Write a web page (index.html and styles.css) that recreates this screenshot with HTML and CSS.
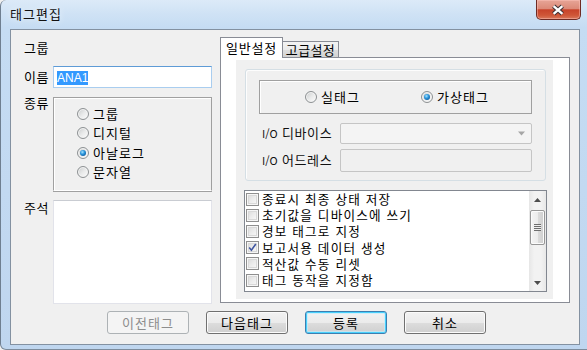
FILE: index.html
```html
<!DOCTYPE html>
<html lang="ko">
<head>
<meta charset="utf-8">
<title>태그편집</title>
<link rel="stylesheet" href="styles.css">
</head>
<body>
<div class="window">
  <div class="titlebar">
    <div class="title">태그편집</div>
    <div class="close-btn">
      <svg width="45" height="20" viewBox="0 0 45 20">
        <path d="M18 6 L27 14 M27 6 L18 14" stroke="#3d3034" stroke-width="4.6" fill="none"/>
        <path d="M18 6 L27 14 M27 6 L18 14" stroke="#ffffff" stroke-width="2.4" fill="none"/>
      </svg>
    </div>
  </div>
  <div class="client">
    <div class="main">
      <div class="left">
        <div class="row row-group"><span class="lbl">그룹</span></div>
        <div class="row row-name"><span class="lbl">이름</span><div class="edit focus"><span class="sel">ANA1</span></div></div>
        <div class="row row-kind">
          <span class="lbl lbl-top">종류</span>
          <div class="groupbox">
            <div class="opt"><span class="radio"></span><span>그룹</span></div>
            <div class="opt"><span class="radio"></span><span>디지털</span></div>
            <div class="opt"><span class="radio checked"></span><span>아날로그</span></div>
            <div class="opt"><span class="radio"></span><span>문자열</span></div>
          </div>
        </div>
        <div class="row row-note"><span class="lbl lbl-note">주석</span><div class="memo"></div></div>
      </div>
      <div class="tabs">
        <div class="tabstrip">
          <div class="tab active">일반설정</div>
          <div class="tab">고급설정</div>
        </div>
        <div class="tabpage">
          <div class="page-inner">
            <div class="rgroup">
              <div class="radiobox">
                <div class="ropt ropt-real"><span class="radio"></span><span>실태그</span></div>
                <div class="ropt"><span class="radio checked"></span><span>가상태그</span></div>
              </div>
              <div class="frow">
                <span class="flbl"><span class="io">I/O</span> 디바이스</span>
                <div class="combo disabled"><span class="combo-text"></span><span class="combo-arrow"><svg width="9" height="5" viewBox="0 0 9 5"><path d="M1 0.5 H8 L4.5 4.5 Z" fill="#a6a6a6"/></svg></span></div>
              </div>
              <div class="frow frow2">
                <span class="flbl"><span class="io">I/O</span> 어드레스</span>
                <div class="dedit"></div>
              </div>
            </div>
            <div class="listbox">
              <div class="items">
                <div class="item"><span class="chk"></span><span class="itxt">종료시 최종 상태 저장</span></div>
                <div class="item"><span class="chk"></span><span class="itxt">초기값을 디바이스에 쓰기</span></div>
                <div class="item"><span class="chk"></span><span class="itxt">경보 태그로 지정</span></div>
                <div class="item"><span class="chk checked"><svg width="9" height="9" viewBox="0 0 9 9"><path d="M1.2 4.6 L3.4 7.2 L7.8 1" stroke="#3f55a0" stroke-width="1.6" fill="none"/></svg></span><span class="itxt">보고서용 데이터 생성</span></div>
                <div class="item"><span class="chk"></span><span class="itxt">적산값 수동 리셋</span></div>
                <div class="item"><span class="chk"></span><span class="itxt">태그 동작을 지정함</span></div>
              </div>
              <div class="scrollbar">
                <div class="sb-btn"><svg width="7" height="4" viewBox="0 0 7 4"><path d="M0 4 H7 L3.5 0 Z" fill="#4d4d4d"/></svg></div>
                <div class="sb-track">
                  <div class="sb-thumb"><span class="grip"></span></div>
                </div>
                <div class="sb-btn"><svg width="7" height="4" viewBox="0 0 7 4"><path d="M0 0 H7 L3.5 4 Z" fill="#4d4d4d"/></svg></div>
              </div>
            </div>
          </div>
        </div>
      </div>
    </div>
    <div class="buttons">
      <div class="btn disabled">이전태그</div>
      <div class="btn">다음태그</div>
      <div class="btn default">등록</div>
      <div class="btn">취소</div>
    </div>
  </div>
</div>
</body>
</html>
```

FILE: styles.css
```css
* { box-sizing: border-box; }
html, body { margin: 0; padding: 0; }
body {
  width: 587px;
  height: 350px;
  overflow: hidden;
  background: #f0f0f0;
  font-family: "Noto Sans CJK KR", "Noto Sans", sans-serif;
  font-size: 13px;
  letter-spacing: 1px;
  line-height: 16px;
  color: #000;
}
.window {
  width: 587px;
  height: 350px;
  display: flex;
  flex-direction: column;
  background: linear-gradient(to bottom, #dceaf8 0px, #cfe2f5 14px, #c5dcf3 28px, #bfd6ef 100%);
  border-left: 1px solid #6f7f90;
  border-bottom: 1px solid #7d8c9c;
  border-radius: 6px 0 0 6px;
}
.titlebar {
  height: 29px;
  display: flex;
  align-items: flex-start;
  padding-left: 9px;
  flex: none;
}
.title {
  margin-top: 6px;
  line-height: 16px;
  color: #111;
  text-shadow: 0 0 6px rgba(255,255,255,0.9);
}
.close-btn {
  margin-left: auto;
  margin-right: 6px;
  width: 45px;
  height: 20px;
  border: 1px solid #6e2b24;
  border-top: none;
  border-radius: 0 0 5px 5px;
  background: linear-gradient(to bottom, #e7a597 0%, #dc8a78 45%, #c8432a 52%, #cf5637 80%, #d9785c 100%);
  box-shadow: inset 0 0 0 1px rgba(255,200,190,0.45);
  display: flex;
}
.close-btn svg { margin-left: -1px; }
.client {
  flex: none;
  margin-left: 9px;
  margin-right: 7px;
  height: 316px;
  background: #f0f0f0;
  border: 1px solid #8391a1;
  display: flex;
  flex-direction: column;
}
.main {
  display: flex;
  height: 273px;
}
.left {
  width: 201px;
  display: flex;
  flex-direction: column;
}
.row { display: flex; }
.lbl {
  width: 42px;
  padding-left: 13px;
  line-height: 16px;
  flex: none;
  letter-spacing: 0.6px;
}
.row-group { margin-top: 10px; }
.row-name { margin-top: 10px; align-items: center; }
.row-kind { margin-top: 9px; }
.lbl-top { margin-top: -2px; }
.row-note { margin-top: 9px; }
.edit {
  width: 159px;
  height: 22px;
  background: #fff;
  border: 1px solid #a9cdef;
  border-top-color: #5e9bd6;
  padding: 2px 0 0 3px;
}
.sel {
  display: inline-block;
  background: #3399ff;
  color: #fff;
  line-height: 14px;
  font-size: 12px;
  letter-spacing: 0;
  font-family: "Liberation Sans", "Noto Sans", sans-serif;
}
.groupbox {
  width: 159px;
  height: 94px;
  border: 1px solid #a0a0a0;
  border-bottom-color: #ffffff;
  box-shadow: inset 1px 1px 0 #ffffff, 0 1px 0 #a0a0a0;
  padding: 6px 0 0 23px;
}
.opt {
  height: 19.5px;
  display: flex;
  align-items: center;
  gap: 4px;
}
.radio {
  width: 12px;
  height: 12px;
  border-radius: 50%;
  border: 1px solid #8d9193;
  background: linear-gradient(135deg, #c9cbcc 0%, #e9eaea 50%, #fdfdfd 100%);
  box-shadow: inset 0 0 0 1px #f4f4f4;
  flex: none;
  display: flex;
  align-items: center;
  justify-content: center;
}
.radio.checked::after {
  content: "";
  width: 6px;
  height: 6px;
  border-radius: 50%;
  background: radial-gradient(circle at 40% 35%, #a8e4ff 0%, #2b96dc 40%, #0c5598 85%, #0a3f73 100%);
}
.memo {
  width: 159px;
  height: 104px;
  background: #fff;
  border: 1px solid #e2e3ea;
  border-top-color: #c9ccd2;
}
.tabs {
  margin-left: 8px;
  width: 350px;
  display: flex;
  flex-direction: column;
}
.tabstrip {
  margin-top: 7px;
  height: 20px;
  display: flex;
  align-items: flex-end;
}
.tab {
  height: 16px;
  width: 56px;
  border: 1px solid #898c95;
  border-left: none;
  border-bottom: none;
  background: linear-gradient(to bottom, #f3f3f3 0%, #ebebeb 50%, #dedede 51%, #d3d3d3 100%);
  display: flex;
  align-items: center;
  justify-content: center;
  line-height: 14px;
  letter-spacing: 0.4px;
}
.tab.active {
  width: 63px;
  height: 21px;
  margin-bottom: -1px;
  border-left: 1px solid #898c95;
  background: #fff;
  position: relative;
  z-index: 1;
  padding-bottom: 1px;
  letter-spacing: 0.8px;
}
.tabpage {
  height: 246px;
  border: 1px solid #898c95;
  background: #fff;
  padding: 2px 16px 3px 15px;
}
.page-inner {
  height: 100%;
  background: #f0f0f0;
  padding: 9px 7px 0 9px;
  display: flex;
  flex-direction: column;
}
.rgroup {
  height: 112px;
  border: 1px solid #d5dfe5;
  border-radius: 3px;
  box-shadow: inset 1px 1px 0 #fdfdfd;
  padding: 10px 13px 0 13px;
}
.radiobox {
  height: 34px;
  border: 1px solid #a0a0a0;
  box-shadow: inset 1px 1px 0 #fff;
  display: flex;
  align-items: center;
  padding-left: 45px;
}
.ropt {
  display: flex;
  align-items: center;
  gap: 4px;
}
.ropt-real { width: 116px; }
.frow {
  margin-top: 8px;
  height: 22px;
  display: flex;
  align-items: center;
  padding-left: 3px;
}
.frow2 { margin-top: 5px; }
.flbl {
  width: 78px;
  flex: none;
  color: #111;
  white-space: nowrap;
  letter-spacing: 0.6px;
}
.io { font-size: 11px; letter-spacing: 0; }
.combo {
  width: 192px;
  height: 21px;
  border: 1px solid #c5c5c5;
  border-radius: 2px;
  background: #f4f4f4;
  display: flex;
}
.combo-text { flex: 1; }
.combo-arrow {
  width: 19px;
  display: flex;
  align-items: center;
  justify-content: center;
}
.dedit {
  width: 192px;
  height: 23px;
  border: 1px solid #c5c5c5;
  border-radius: 2px;
  background: #f0f0f0;
}
.listbox {
  margin-top: 9px;
  margin-right: -1px;
  margin-left: -1px;
  height: 102px;
  border: 1px solid #828790;
  background: #fff;
  display: flex;
}
.items {
  flex: 1;
}
.item {
  height: 16.2px;
  line-height: 14px;
  display: flex;
  align-items: center;
  gap: 3px;
  padding-left: 1px;
  white-space: nowrap;
}
.itxt { font-size: 12.6px; letter-spacing: 1.2px; }
.chk {
  width: 13px;
  height: 13px;
  border: 1px solid #8f8f8f;
  background: linear-gradient(135deg, #d6d6d6 0%, #ececec 50%, #fbfbfb 100%);
  box-shadow: inset 0 0 0 1px #f6f6f6, inset 0 0 0 2px #d9d9d9;
  flex: none;
  display: flex;
  align-items: center;
  justify-content: center;
}
.scrollbar {
  width: 17px;
  display: flex;
  flex-direction: column;
  background: linear-gradient(to right, #e6e6e6 0%, #f2f2f2 30%, #f2f2f2 70%, #e8e8e8 100%);
}
.sb-btn {
  height: 17px;
  display: flex;
  align-items: center;
  justify-content: center;
}
.sb-track {
  flex: 1;
  padding-top: 2px;
}
.sb-thumb {
  margin: 0 1px;
  height: 35px;
  border: 1px solid #979797;
  border-radius: 2px;
  background: linear-gradient(to right, #f4f4f4 0%, #ececec 50%, #dcdcdc 51%, #cfcfcf 100%);
  box-shadow: inset 0 0 0 1px #fbfbfb;
  display: flex;
  align-items: center;
  justify-content: center;
}
.grip {
  width: 7px;
  height: 7px;
  background: repeating-linear-gradient(to bottom, #6e6e6e 0px, #6e6e6e 1px, #eeeeee 1px, #eeeeee 2px);
}
.buttons {
  display: flex;
  gap: 17px;
  margin-top: 8px;
  padding-left: 96px;
}
.btn {
  width: 82px;
  height: 23px;
  border: 1px solid #707070;
  border-radius: 3px;
  background: linear-gradient(to bottom, #f2f2f2 0%, #ebebeb 50%, #dddddd 51%, #cfcfcf 100%);
  box-shadow: inset 0 0 0 1px #fbfbfb;
  display: flex;
  align-items: center;
  justify-content: center;
  line-height: 14px;
}
.btn.disabled {
  border-color: #adb2b5;
  background: #f4f4f4;
  box-shadow: none;
  color: #8d8d8d;
}
.btn.default {
  border-color: #3c7fb1;
  box-shadow: inset 0 0 0 1px #48d0fc, inset 0 0 0 2px rgba(190,236,255,0.6);
}
```
